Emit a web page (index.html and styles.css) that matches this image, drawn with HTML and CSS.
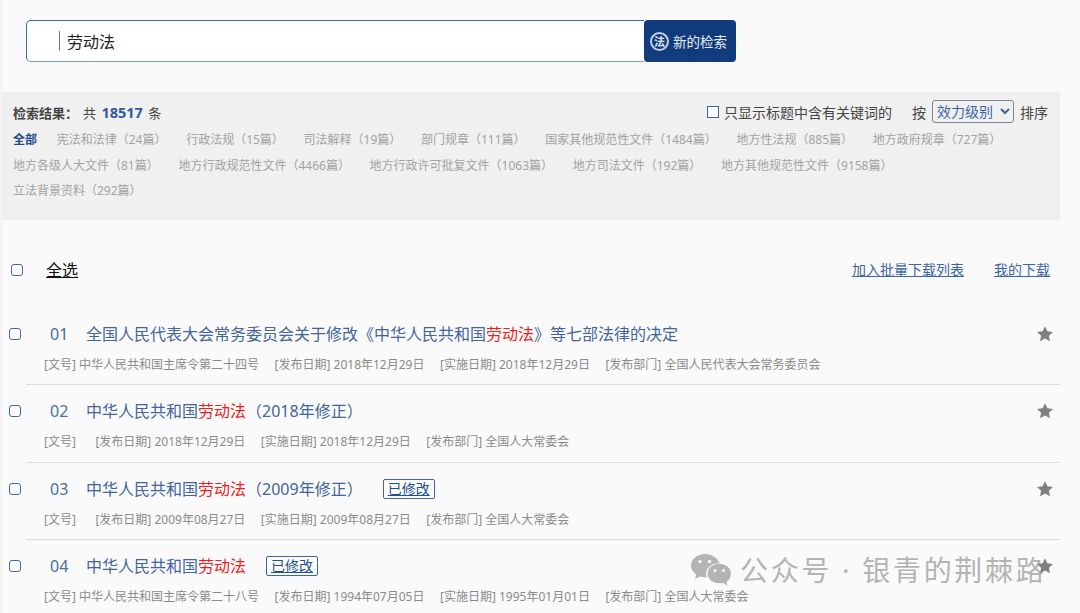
FILE: index.html
```html
<!DOCTYPE html>
<html lang="zh-CN">
<head>
<meta charset="utf-8">
<title>劳动法 检索结果</title>
<link rel="stylesheet" href="styles.css">
</head>
<body>
<div class="page">
  <div class="search">
    <div class="search-input"><span class="caret"></span>劳动法</div>
    <a class="search-btn"><span class="seal"><span class="seal-in">法</span></span>新的检索</a>
  </div>

  <section class="panel">
    <div class="panel-top">
      <div class="total"><b>检索结果：</b>共 <strong>18517</strong> 条</div>
      <div class="opts">
        <span class="box box-sq"></span><span class="only">只显示标题中含有关键词的</span>
        <span class="by">按</span>
        <select class="sort"><option>效力级别</option></select>
        <span>排序</span>
      </div>
    </div>
    <div class="cats">
      <a class="cat on">全部</a>
      <a class="cat">宪法和法律（24篇）</a>
      <a class="cat">行政法规（15篇）</a>
      <a class="cat">司法解释（19篇）</a>
      <a class="cat">部门规章（111篇）</a>
      <a class="cat">国家其他规范性文件（1484篇）</a>
      <a class="cat">地方性法规（885篇）</a>
      <a class="cat">地方政府规章（727篇）</a>
      <a class="cat">地方各级人大文件（81篇）</a>
      <a class="cat">地方行政规范性文件（4466篇）</a>
      <a class="cat">地方行政许可批复文件（1063篇）</a>
      <a class="cat">地方司法文件（192篇）</a>
      <a class="cat">地方其他规范性文件（9158篇）</a>
      <a class="cat">立法背景资料（292篇）</a>
    </div>
  </section>

  <div class="toolbar">
    <span class="box"></span>
    <span class="all">全选</span>
    <a class="link batch">加入批量下载列表</a>
    <a class="link">我的下载</a>
  </div>

  <ul class="list">
    <li class="row">
      <span class="box"></span><span class="num">01</span>
      <div class="title"><a>全国人民代表大会常务委员会关于修改《中华人民共和国<em>劳动法</em>》等七部法律的决定</a></div>
      <svg class="star" viewBox="0 0 24 24"><path d="M12 1.5l3.2 6.9 7.5.9-5.5 5.1 1.5 7.4L12 18.1l-6.7 3.7 1.5-7.4L1.3 9.3l7.5-.9z"/></svg>
      <div class="meta"><span>[文号] 中华人民共和国主席令第二十四号</span><span>[发布日期] 2018年12月29日</span><span>[实施日期] 2018年12月29日</span><span>[发布部门] 全国人民代表大会常务委员会</span></div>
    </li>
    <li class="row">
      <span class="box"></span><span class="num">02</span>
      <div class="title"><a>中华人民共和国<em>劳动法</em>（2018年修正）</a></div>
      <svg class="star" viewBox="0 0 24 24"><path d="M12 1.5l3.2 6.9 7.5.9-5.5 5.1 1.5 7.4L12 18.1l-6.7 3.7 1.5-7.4L1.3 9.3l7.5-.9z"/></svg>
      <div class="meta"><span class="no-empty">[文号]</span><span>[发布日期] 2018年12月29日</span><span>[实施日期] 2018年12月29日</span><span>[发布部门] 全国人大常委会</span></div>
    </li>
    <li class="row">
      <span class="box"></span><span class="num">03</span>
      <div class="title"><a>中华人民共和国<em>劳动法</em>（2009年修正）</a><span class="tag">已修改</span></div>
      <svg class="star" viewBox="0 0 24 24"><path d="M12 1.5l3.2 6.9 7.5.9-5.5 5.1 1.5 7.4L12 18.1l-6.7 3.7 1.5-7.4L1.3 9.3l7.5-.9z"/></svg>
      <div class="meta"><span class="no-empty">[文号]</span><span>[发布日期] 2009年08月27日</span><span>[实施日期] 2009年08月27日</span><span>[发布部门] 全国人大常委会</span></div>
    </li>
    <li class="row">
      <span class="box"></span><span class="num">04</span>
      <div class="title"><a>中华人民共和国<em>劳动法</em></a><span class="tag">已修改</span></div>
      <svg class="star" viewBox="0 0 24 24"><path d="M12 1.5l3.2 6.9 7.5.9-5.5 5.1 1.5 7.4L12 18.1l-6.7 3.7 1.5-7.4L1.3 9.3l7.5-.9z"/></svg>
      <div class="meta"><span>[文号] 中华人民共和国主席令第二十八号</span><span>[发布日期] 1994年07月05日</span><span>[实施日期] 1995年01月01日</span><span>[发布部门] 全国人大常委会</span></div>
    </li>
  </ul>

  <div class="watermark">
    <svg class="wechat" viewBox="0 0 42 34">
      <path fill="#b4b4b4" d="M15 1C7 1 1 6.200 1 12.500c0 3.700 2 6.900 5.200 9L5 26l4.800-2.500c1.600.5 3.400.8 5.200.8.500 0 1 0 1.500-.1-.3-1-.5-2-.5-3.100 0-6 5.600-10.800 12.600-10.800h1C27.700 5 21.900 1 15 1z"/>
      <path fill="#b4b4b4" d="M41 20.500c0-5.400-5.300-9.800-11.800-9.800S17.500 15.100 17.500 20.500s5.300 9.800 11.700 9.800c1.400 0 2.800-.2 4-.6L37.500 33l-1-4.200c2.800-1.900 4.500-4.900 4.500-8.300z"/>
      <circle cx="10" cy="8.500" r="1.700" fill="#f9f9f9"/><circle cx="19.500" cy="8.500" r="1.700" fill="#f9f9f9"/>
      <circle cx="25" cy="17.500" r="1.500" fill="#f9f9f9"/><circle cx="33.500" cy="17.500" r="1.500" fill="#f9f9f9"/>
    </svg>
    <span>公众号 · 银青的荆棘路</span>
  </div>
</div>
</body>
</html>
```
FILE: styles.css
```css
* { box-sizing: border-box; }
html, body { margin: 0; height: 100%; overflow: hidden; }
body {
  background: linear-gradient(90deg, #f3f3f3 2px, #fafafa 2px);
  font-family: "Noto Sans", "Noto Sans CJK SC", sans-serif;
  color: #333;
}
a { text-decoration: none; }
ul { list-style: none; margin: 0; padding: 0; }

.page { position: relative; width: 1080px; height: 613px; overflow: hidden; padding-top: 20px; }

/* search */
.search { display: flex; width: 710px; height: 42px; margin-left: 26px; }
.search-input {
  flex: 1;
  display: flex;
  align-items: center;
  padding-left: 32px;
  background: #fff;
  border: 1px solid #3c68a6;
  border-bottom-color: #7d9cc8;
  border-right: 0;
  border-radius: 5px 0 0 5px;
  font-size: 16px;
  color: #222;
}
.caret { width: 1px; height: 20px; background: #777; margin-right: 7px; }
.search-btn {
  width: 92px;
  display: flex;
  align-items: center;
  gap: 4px;
  padding-left: 6px;
  background: #123b7d;
  border-radius: 4px;
  color: #e9eef6;
  font-size: 13.500px;
  white-space: nowrap;
}
.seal {
  width: 19px; height: 19px;
  border-radius: 50%;
  border: 2px solid #c3cfe0;
  display: flex;
  align-items: center;
  justify-content: center;
  flex: none;
}
.seal-in { font-size: 11px; line-height: 1; color: #dfe6f0; font-weight: 700; }

/* panel */
.panel {
  margin: 30px 20px 0 2px;
  height: 128px;
  background: #f0f0f0;
  padding: 8px 12px 0 11px;
}
.panel-top { display: flex; justify-content: space-between; align-items: center; height: 23px; }
.total { font-size: 13px; color: #444; }
.total b { font-weight: 700; color: #444; margin-right: 5px; }
.total strong { font-size: 14.500px; color: #2e5a9c; font-weight: 700; margin: 0 2px; }
.opts { display: flex; align-items: center; color: #444; font-size: 14px; }
.box-sq.box { border-radius: 0; border-width: 1.500px; border-color: #3c68a6; margin-right: 5px; }
.only { margin-right: 20px; }
.by { margin-right: 6px; }
.sort {
  width: 82px; height: 23px;
  margin-right: 6px;
  font-family: inherit;
  font-size: 14px;
  color: #3a66a8;
  background: #f0f0f0;
  border: 1px solid #7d8794;
  border-radius: 3px;
  padding: 0;
}
.cats { display: flex; flex-wrap: wrap; column-gap: 19.700px; max-width: 1000px; margin-top: 4px; font-size: 12px; line-height: 25.500px; }
.cat { color: #a3a3a3; white-space: nowrap; }
.cat.on { color: #1f4a8a; font-weight: 700; }

/* checkbox */
.box {
  display: block;
  flex: none;
  width: 12px; height: 12px;
  border: 1px solid #44689f;
  border-radius: 3px;
  background: #fbfcfd;
}

/* toolbar */
.toolbar {
  display: flex;
  align-items: center;
  height: 24px;
  margin-top: 38px;
  padding: 0 30px 0 11px;
  font-size: 14px;
}
.all { margin: 0 0 2px 23px; font-size: 16px; color: #111; text-decoration: underline; flex: 1; }
.link { color: #3c66a5; text-decoration: underline; margin-bottom: 2px; }
.batch { margin-right: 30px; }

/* list */
.list { margin-top: 39px; }
.row {
  display: grid;
  grid-template-columns: 41px 36px 1fr 24px;
  grid-template-rows: 26px 20px;
  row-gap: 8px;
  align-items: center;
  height: 77.300px;
  margin: 0 20px 0 9px;
  position: relative;
}
.row:not(:last-child)::after {
  content: "";
  position: absolute;
  left: 17px; right: 0; bottom: 13px;
  height: 1px;
  background: #dcdcdc;
}
.num { font-size: 16px; line-height: 26px; color: #4a6da3; }
.title { display: flex; align-items: center; font-size: 16px; line-height: 26px; white-space: nowrap; }
.title a { color: #42659d; }
.title em { font-style: normal; color: #f01d1d; }
.tag {
  margin-left: 20px;
  padding: 0 4px;
  height: 20px;
  line-height: 18px;
  font-size: 14px;
  color: #234f8e;
  border: 1px solid #3d66a3;
  border-radius: 2px;
  text-decoration: underline;
  background: #fdfdfd;
}
.star { width: 18px; height: 18px; justify-self: end; fill: #808080; margin-right: 6px; position: relative; z-index: 1; }
.meta {
  grid-column: 1 / -1;
  padding-left: 35px;
  display: flex;
  gap: 15.500px;
  font-size: 12px;
  line-height: 20px;
  color: #8a8a8a;
  white-space: nowrap;
}
.no-empty { margin-right: 4px; }

/* watermark */
.watermark {
  position: absolute;
  left: 690px;
  top: 551px;
  display: flex;
  align-items: center;
  gap: 8px;
  font-size: 28px;
  line-height: 38px;
  letter-spacing: 2.700px;
  color: #b4b4b4;
  white-space: nowrap;
}
.wechat { width: 42px; height: 34px; flex: none; }
```
